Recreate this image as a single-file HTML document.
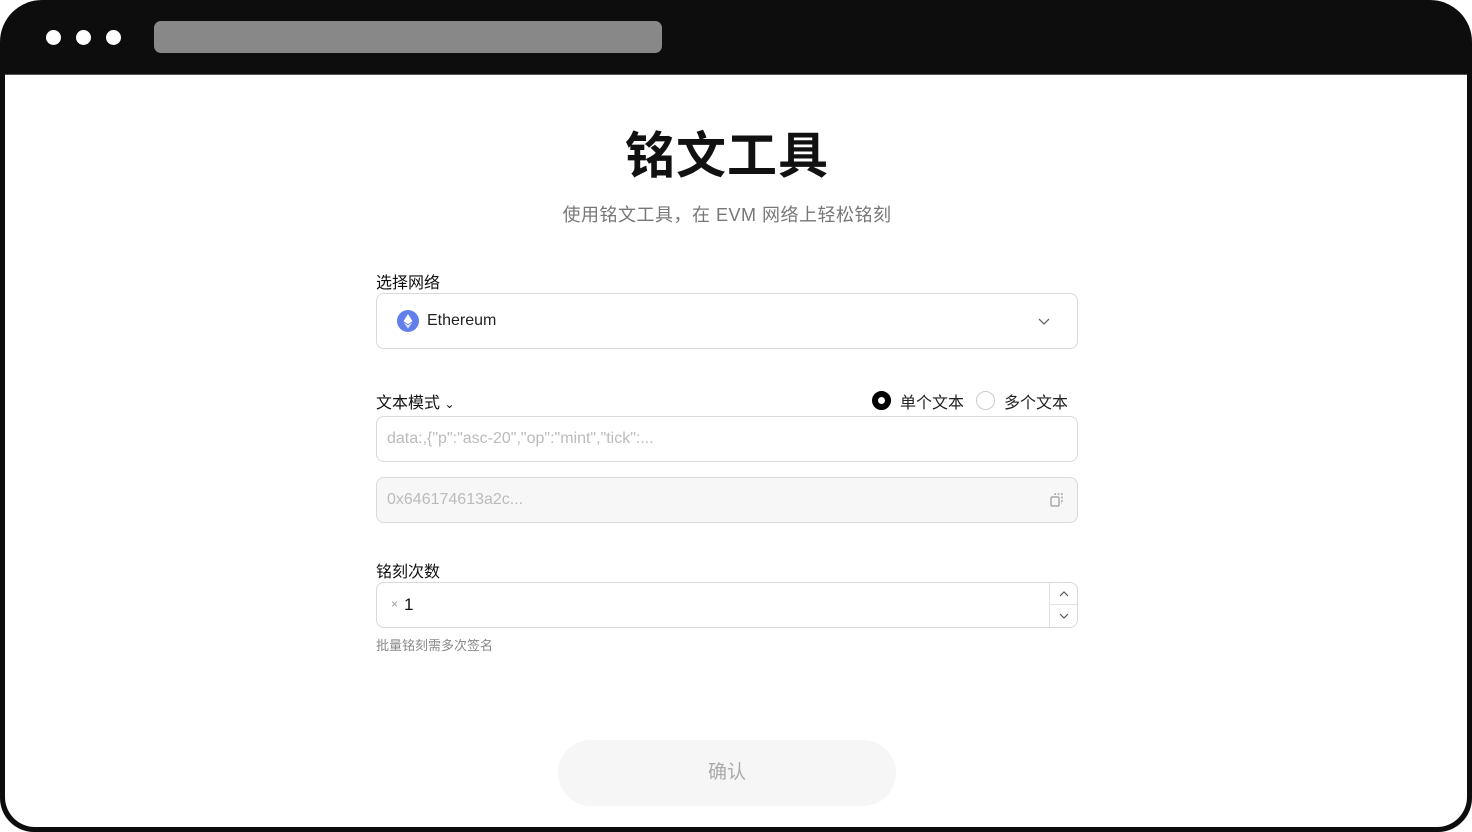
<!DOCTYPE html>
<html><head><meta charset="utf-8"><style>
*{margin:0;padding:0;box-sizing:border-box}
body{width:1472px;height:832px;background:#fff;font-family:"Liberation Sans","Noto Sans CJK SC",sans-serif;position:relative;overflow:hidden}
.frame{position:absolute;left:0;top:0;width:1472px;height:832px;background:#0d0d0d;border-radius:42px 42px 34px 34px}
.inner{position:absolute;left:5px;top:74px;width:1462px;height:753px;background:#fff;border-radius:0 0 30px 30px;border-top:1px solid #555}
.dot{position:absolute;top:30px;width:15px;height:15px;border-radius:50%;background:#fff}
.url{position:absolute;left:154px;top:21px;width:508px;height:32px;background:#888;border-radius:7px}
.abs{position:absolute}
h1{position:absolute;left:427px;width:600px;top:124px;text-align:center;font-size:50px;font-weight:bold;color:#111;letter-spacing:1px;line-height:64px}
.sub{left:427px;width:600px;top:201px;text-align:center;font-size:18px;color:#777;letter-spacing:0.5px}
.lbl{font-size:16px;color:#111}
.box{position:absolute;left:376px;width:702px;border:1px solid #d9d9d9;border-radius:8px;background:#fff}
.ph{font-size:16px;color:#bbb}
</style></head><body>
<div class="frame"></div>
<div class="inner"></div>
<div class="dot" style="left:46px"></div><div class="dot" style="left:76px"></div><div class="dot" style="left:106px"></div>
<div class="url"></div>
<h1>铭文工具</h1>
<div class="abs sub">使用铭文工具，在 EVM 网络上轻松铭刻</div>
<div class="abs lbl" style="left:376px;top:269px">选择网络</div>
<div class="box" style="top:293px;height:56px">
 <div class="abs" style="left:20px;top:16px;width:22px;height:22px;border-radius:50%;background:#627eea">
  <svg width="22" height="22" viewBox="0 0 22 22"><path d="M11 4 L15.5 11.3 L11 14 L6.5 11.3Z" fill="#fff"/><path d="M11 15 L15.5 12.3 L11 18.5 L6.5 12.3Z" fill="#fff" opacity=".8"/></svg>
 </div>
 <div class="abs" style="left:50px;top:18px;font-size:16px;color:#222">Ethereum</div>
 <svg class="abs" style="left:660px;top:20px" width="14" height="14" viewBox="0 0 14 14"><path d="M2 5 L7 10 L12 5" fill="none" stroke="#666" stroke-width="1.3"/></svg>
</div>
<div class="abs lbl" style="left:376px;top:389px">文本模式 <span style="font-size:12px">⌄</span></div>
<div class="abs" style="left:872px;top:391px;width:19px;height:19px;border-radius:50%;border:6px solid #000"></div>
<div class="abs" style="left:900px;top:389px;font-size:16px;color:#222">单个文本</div>
<div class="abs" style="left:976px;top:391px;width:19px;height:19px;border-radius:50%;border:1px solid #ccc"></div>
<div class="abs" style="left:1004px;top:389px;font-size:16px;color:#222">多个文本</div>
<div class="box" style="top:416px;height:46px"><div class="abs ph" style="left:10px;top:13px">data:,{"p":"asc-20","op":"mint","tick":...</div></div>
<div class="box" style="top:477px;height:46px;background:#f7f7f7"><div class="abs ph" style="left:10px;top:13px">0x646174613a2c...</div>
 <svg class="abs" style="left:672px;top:14px" width="16" height="16" viewBox="0 0 16 16"><rect x="2" y="5" width="8" height="9" rx="1" fill="none" stroke="#999" stroke-width="1.2"/><path d="M6 3 V2 H13 V11 H12" fill="none" stroke="#999" stroke-width="1.2" stroke-dasharray="2 1.5"/></svg>
</div>
<div class="abs lbl" style="left:376px;top:558px">铭刻次数</div>
<div class="box" style="top:582px;height:46px">
 <div class="abs" style="left:14px;top:14px;font-size:12px;color:#999">×</div>
 <div class="abs" style="left:27px;top:12px;font-size:17px;color:#111">1</div>
 <div class="abs" style="left:672px;top:0;width:29px;height:44px;border-left:1px solid #e3e3e3">
  <div style="height:22px;border-bottom:1px solid #e3e3e3;position:relative"><svg class="abs" style="left:9px;top:6px" width="10" height="10" viewBox="0 0 10 10"><path d="M1 7 L5 3 L9 7" fill="none" stroke="#555" stroke-width="1.2"/></svg></div>
  <div style="position:relative"><svg class="abs" style="left:9px;top:6px" width="10" height="10" viewBox="0 0 10 10"><path d="M1 3 L5 7 L9 3" fill="none" stroke="#555" stroke-width="1.2"/></svg></div>
 </div>
</div>
<div class="abs" style="left:376px;top:635px;font-size:13px;color:#888">批量铭刻需多次签名</div>
<div class="abs" style="left:558px;top:740px;width:338px;height:66px;border-radius:33px;background:#f6f6f6;text-align:center;line-height:66px;font-size:19px;color:#aaa">确认</div>
</body></html>
